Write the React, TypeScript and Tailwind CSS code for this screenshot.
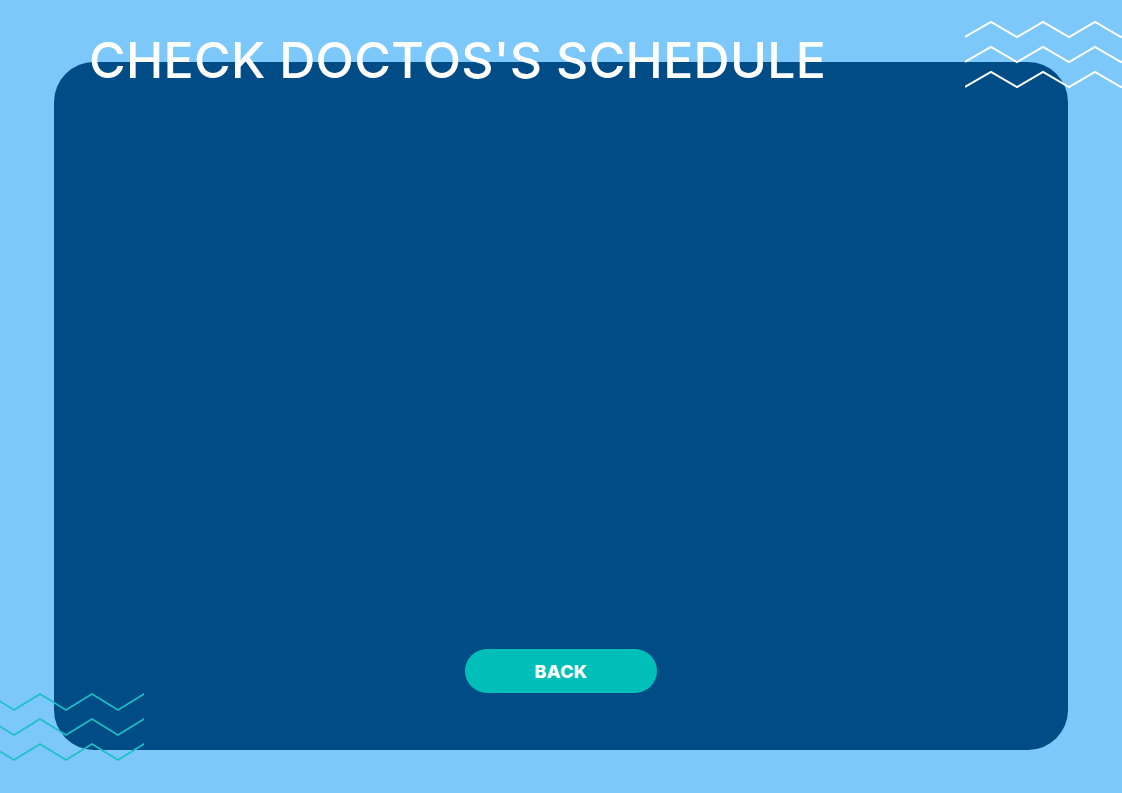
import React from 'react'

function ZigZag({ color, width, rows, period, amp, gap, startY, strokeWidth, startX = 0, startDown = false }: {
  color: string
  width: number
  rows: number
  period: number
  amp: number
  gap: number
  startY: number
  strokeWidth: number
  startX?: number
  startDown?: boolean
}) {
  const lines = []
  for (let r = 0; r < rows; r++) {
    const top = startY + r * gap
    const pts: string[] = []
    let x = startX
    let down = startDown
    while (x <= width + period) {
      pts.push(`${x},${down ? top + amp : top}`)
      x += period / 2
      down = !down
    }
    lines.push(
      <polyline key={r} points={pts.join(' ')} fill="none" stroke={color} strokeWidth={strokeWidth} strokeLinejoin="miter" />
    )
  }
  return (
    <svg width={width} height={startY + rows * gap + amp} viewBox={`0 0 ${width} ${startY + rows * gap + amp}`}>
      {lines}
    </svg>
  )
}

export default function App() {
  return (
    <div className="relative w-[1122px] h-[793px] overflow-hidden bg-[#7dc8fa]" style={{ fontFamily: '"Open Sans", "Liberation Sans", sans-serif' }}>
      {/* top right zigzags */}
      <div className="absolute top-0 left-[965px] z-20">
        <ZigZag color="#ffffff" width={157} rows={3} period={52} amp={15} gap={25} startY={22} strokeWidth={2} startX={0} startDown={true} />
      </div>

      <div className="flex flex-col pt-[32px] px-[54px]">
        <h1 className="relative z-10 ml-[35px] -mb-[26px] text-white text-[50px] leading-[56px] font-medium tracking-[0.3px] whitespace-nowrap" style={{ fontFamily: 'Inter, "Liberation Sans", sans-serif' }}>
          CHECK DOCTOS'S SCHEDULE
        </h1>
        <div className="h-[688px] w-[1014px] rounded-[40px] bg-[#004c86] flex flex-col items-center justify-end pb-[57px]">
          <button className="w-[192px] h-[44px] rounded-full bg-[#00bfbb] text-white text-[18px] font-extrabold tracking-[0.3px]" style={{ fontFamily: 'Inter, "Liberation Sans", sans-serif' }}>
            BACK
          </button>
        </div>
      </div>

      {/* bottom left zigzags */}
      <div className="absolute left-0 top-[680px] z-20">
        <ZigZag color="#1cbfc6" width={144} rows={3} period={52} amp={16} gap={25} startY={14} strokeWidth={1.6} startX={-12} startDown={false} />
      </div>
    </div>
  )
}
